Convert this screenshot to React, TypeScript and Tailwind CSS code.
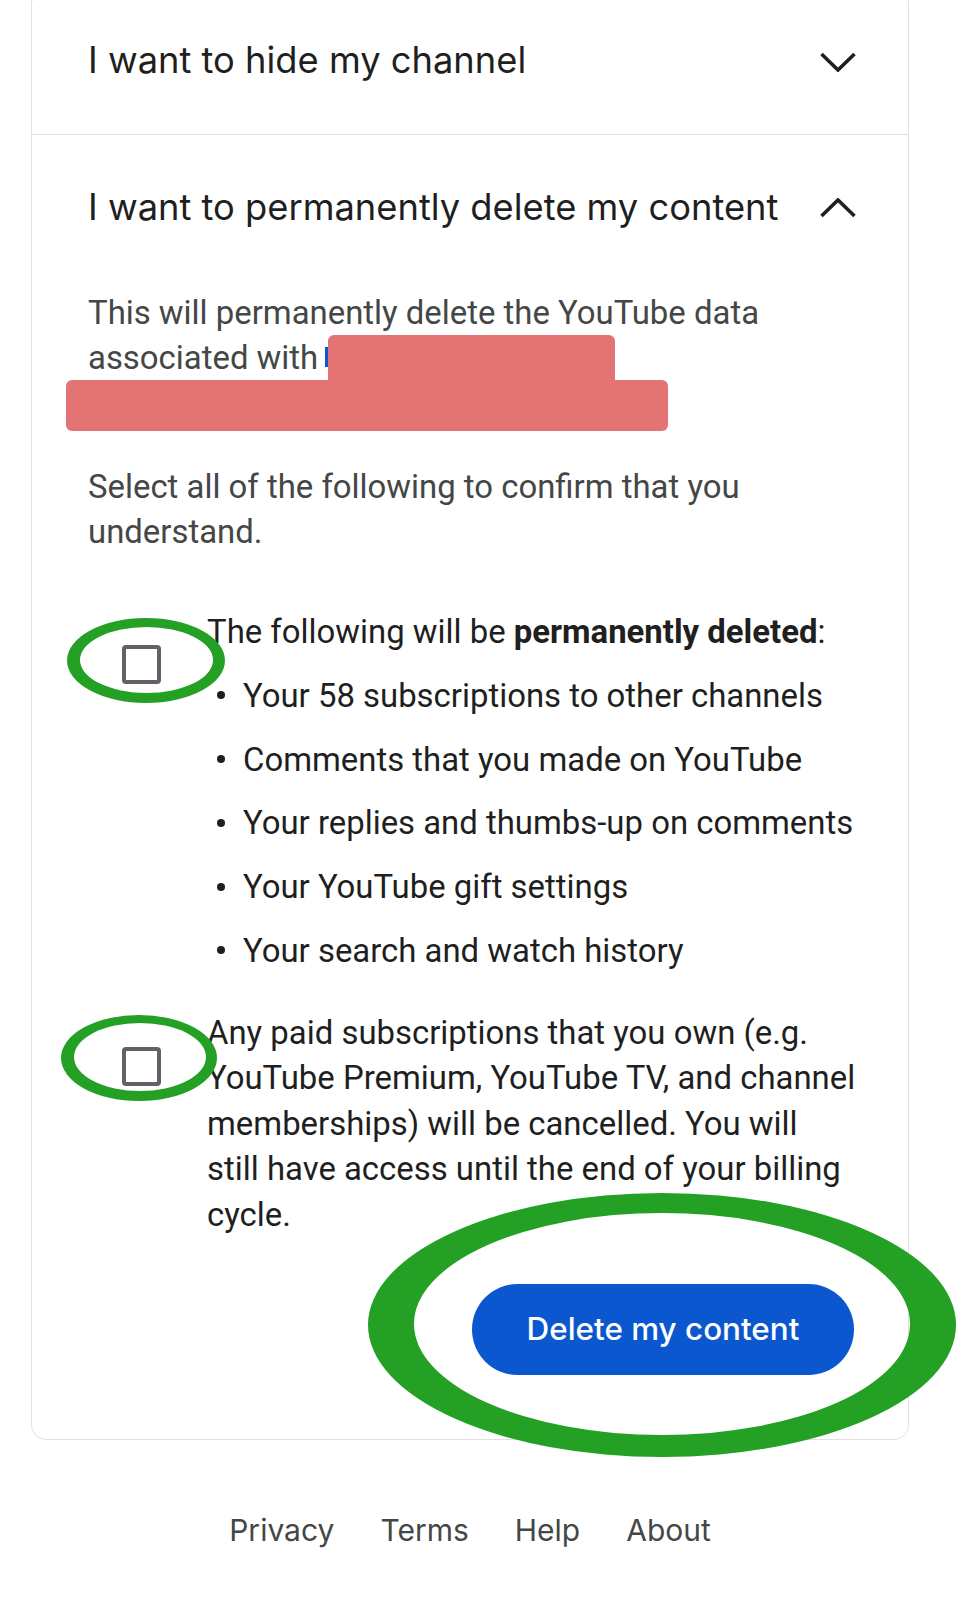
import React from 'react'

const HEAD = { fontFamily: 'Inter, "Open Sans", sans-serif' }
const BODY = { fontFamily: 'Roboto, "Liberation Sans", sans-serif' }

const DELETED = [
  'Your 58 subscriptions to other channels',
  'Comments that you made on YouTube',
  'Your replies and thumbs-up on comments',
  'Your YouTube gift settings',
  'Your search and watch history',
]

const PAID_LINES = [
  'Any paid subscriptions that you own (e.g.',
  'YouTube Premium, YouTube TV, and channel',
  'memberships) will be cancelled. You will',
  'still have access until the end of your billing',
  'cycle.',
]

function Chevron({ up }: { up?: boolean }) {
  return (
    <svg width="36" height="20" viewBox="0 0 36 20" className="shrink-0">
      <polyline
        points={up ? '1.5,18 18,2 34.5,18' : '1.5,2 18,18 34.5,2'}
        fill="none"
        stroke="#1f1f1f"
        strokeWidth="3.6"
      />
    </svg>
  )
}

function Checkbox() {
  return <div className="w-[39px] h-[39px] rounded-[4px] border-[4px] border-[#5f6368] bg-white" />
}

function Ring({ cx, cy, rx, ry, irx, iry, icx, icy }: { cx: number; cy: number; rx: number; ry: number; irx: number; iry: number; icx: number; icy: number }) {
  const outer = `M ${cx - rx} ${cy} a ${rx} ${ry} 0 1 0 ${rx * 2} 0 a ${rx} ${ry} 0 1 0 ${-rx * 2} 0 Z`
  const inner = `M ${icx - irx} ${icy} a ${irx} ${iry} 0 1 0 ${irx * 2} 0 a ${irx} ${iry} 0 1 0 ${-irx * 2} 0 Z`
  return <path d={`${outer} ${inner}`} fill="#24a024" fillRule="evenodd" />
}

export default function App() {
  return (
    <div className="relative w-[961px] h-[1600px] overflow-hidden bg-white" style={BODY}>
      <div className="ml-[31px] w-[878px] -mt-[12px] border border-[#e0e0e0] rounded-[15px] bg-white">
        <div className="h-[146px] border-b border-[#e0e0e0] pl-[56px] pr-[52px] flex items-center justify-between">
          <div className="text-[36.3px] text-[#1f1f1f] -mt-[3px]" style={HEAD}>I want to hide my channel</div>
          <Chevron />
        </div>
        <div className="h-[146px] pl-[56px] pr-[52px] flex items-center justify-between">
          <div className="text-[36.3px] text-[#1f1f1f] -mt-[2px]" style={HEAD}>I want to permanently delete my content</div>
          <Chevron up />
        </div>

        <div className="pl-[56px] pr-[54px] pb-[64px]">
          <div className="relative mt-[9px] text-[32.9px] leading-[45px] text-[#444746]">
            <div>This will permanently delete the YouTube data</div>
            <div>associated with</div>
            <div>&nbsp;</div>
            <div className="absolute left-[237px] top-[57px] w-[3px] h-[20px] bg-[#0b57d0]" />
            <div className="absolute left-[240px] top-[45px] w-[287px] h-[48px] rounded-t-[6px] bg-[#e47373]" />
            <div className="absolute -left-[22px] top-[90px] w-[602px] h-[51px] rounded-[6px] bg-[#e47373]" />
          </div>

          <div className="mt-[39px] text-[32.9px] leading-[45px] text-[#444746]">
            <div>Select all of the following to confirm that you</div>
            <div>understand.</div>
          </div>

          <div className="mt-[55px] flex text-[32.9px] text-[#1f1f1f]">
            <div className="w-[119px] shrink-0 pl-[34px] pt-[36px]">
              <Checkbox />
            </div>
            <div>
              <div className="leading-[45px]">
                The following will be <span className="font-bold">permanently deleted</span>:
              </div>
              {DELETED.map(item => (
                <div key={item} className="mt-[18.75px] leading-[45px] flex items-center">
                  <span className="w-[8px] h-[8px] rounded-full bg-[#1f1f1f] ml-[10px] mr-[18px]" />
                  {item}
                </div>
              ))}
            </div>
          </div>

          <div className="mt-[37px] flex text-[32.9px] text-[#1f1f1f]">
            <div className="w-[119px] shrink-0 pl-[34px] pt-[37px]">
              <Checkbox />
            </div>
            <div className="leading-[45.5px]">
              {PAID_LINES.map(l => <div key={l} className="whitespace-nowrap">{l}</div>)}
            </div>
          </div>

          <div className="mt-[47px] flex justify-end">
            <button className="h-[91px] w-[382px] rounded-full bg-[#0b57d0] text-white text-[31.4px] font-medium" style={HEAD}>
              Delete my content
            </button>
          </div>
        </div>
      </div>

      <div className="ml-[31px] w-[878px] mt-[70px] flex justify-center gap-[46px] text-[30px] leading-[40px] text-[#444746]" style={HEAD}>
        <span>Privacy</span>
        <span>Terms</span>
        <span>Help</span>
        <span>About</span>
      </div>

      <svg className="absolute left-0 top-0 pointer-events-none" width="961" height="1600">
        <Ring cx={146} cy={660.5} rx={79} ry={42.5} icx={146.5} icy={660} irx={66.5} iry={33} />
        <Ring cx={139} cy={1058} rx={78} ry={43} icx={140} icy={1057} irx={66} iry={34} />
        <Ring cx={662} cy={1325} rx={294} ry={132} icx={662} icy={1324} irx={248} iry={111} />
      </svg>
    </div>
  )
}
